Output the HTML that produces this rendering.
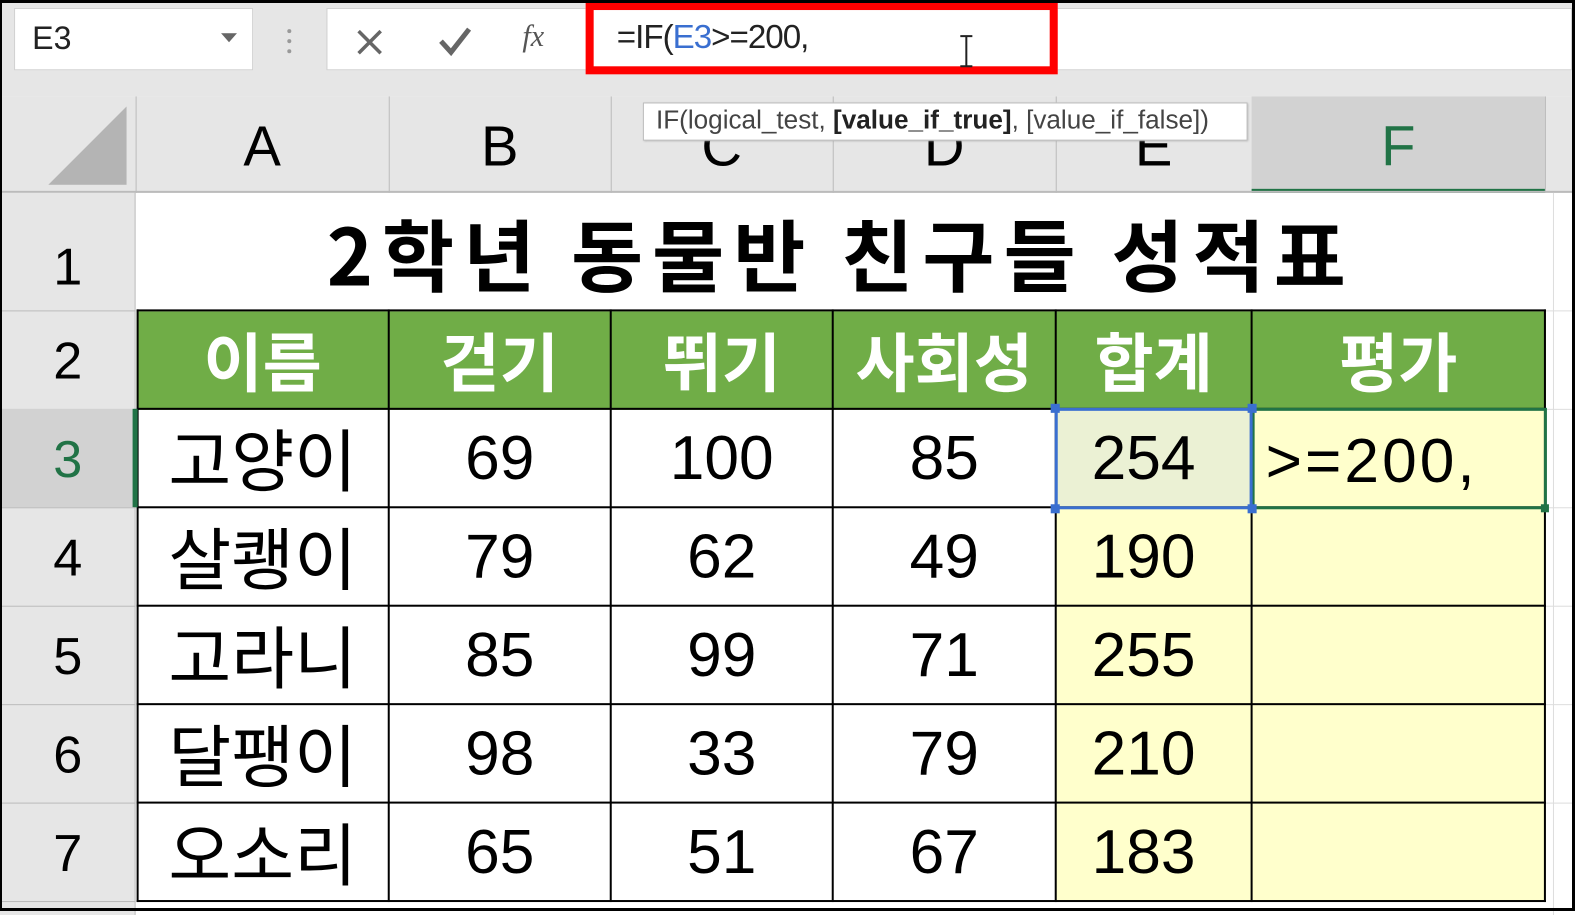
<!DOCTYPE html>
<html><head><meta charset="utf-8"><style>
*{margin:0;padding:0;box-sizing:border-box}
body{width:1575px;height:911px;overflow:hidden;background:#fff;position:relative;font-family:"Liberation Sans","Noto Sans CJK KR",sans-serif}
#w{position:absolute;left:0;top:0;width:1575px;height:911px;transform:scale(1.0045);transform-origin:0 0}
.a{position:absolute}
.frame{left:0;top:0;width:1575px;height:911px;border:3px solid #000;border-left:2px solid #000;z-index:50;pointer-events:none}
.c{position:absolute;display:flex;align-items:center;justify-content:center;color:#000}
.hl{position:absolute;background:#000}
.k{font-family:"Noto Sans CJK KR",sans-serif;font-size:68px;font-weight:400}
</style></head><body><div id="w">
<div class="a" style="left:0;top:0;width:1575px;height:96px;background:#e6e6e6"></div>
<div class="a" style="left:14px;top:8px;width:238px;height:62px;background:#fff;border:1px solid #d0d0d0"></div>
<div class="a" style="left:32px;top:20px;font-size:32px;color:#222;font-family:'Liberation Sans Narrow','Liberation Sans',sans-serif">E3</div>
<svg class="a" style="left:220px;top:33px" width="16" height="10"><path d="M0 0H16L8 9Z" fill="#666"/></svg>
<svg class="a" style="left:284px;top:28px" width="8" height="26"><circle cx="4" cy="3" r="2" fill="#999"/><circle cx="4" cy="13" r="2" fill="#999"/><circle cx="4" cy="23" r="2" fill="#999"/></svg>
<div class="a" style="left:325px;top:8px;width:1240px;height:62px;background:#fff;border:1px solid #d0d0d0"></div>
<svg class="a" style="left:354px;top:28px" width="28" height="28"><path d="M3 3L25 25M25 3L3 25" stroke="#666" stroke-width="3.5"/></svg>
<svg class="a" style="left:436px;top:26px" width="34" height="30"><path d="M3 15L13 26L31 3" stroke="#666" stroke-width="5" fill="none"/></svg>
<div class="a" style="left:520px;top:20px;font-size:30px;font-style:italic;font-family:'Liberation Serif',serif;color:#555">fx</div>
<div class="a" style="left:583px;top:2px;width:470px;height:72px;border:8px solid #f00;background:#fff"></div>
<div class="a" style="left:614px;top:18px;font-size:33px;color:#222;letter-spacing:-1px;font-family:'Liberation Sans Narrow','Liberation Sans',sans-serif">=IF(<span style="color:#3a6fd0">E3</span>&gt;=200,</div>
<svg class="a" style="left:954px;top:34px" width="16" height="34"><path d="M2 2H14M8 2V32M2 32H14" stroke="#222" stroke-width="2"/></svg>
<div class="a" style="left:0;top:96px;width:1575px;height:96px;background:#e6e6e6"></div>
<svg class="a" style="left:48px;top:106px" width="80" height="78"><path d="M78 0V78H0Z" fill="#b4b4b4"/></svg>
<div class="a" style="left:135px;top:96px;width:1px;height:96px;background:#bbb"></div>
<div class="a" style="left:387px;top:96px;width:1px;height:96px;background:#bbb"></div>
<div class="a" style="left:608px;top:96px;width:1px;height:96px;background:#bbb"></div>
<div class="a" style="left:829px;top:96px;width:1px;height:96px;background:#bbb"></div>
<div class="a" style="left:1051px;top:96px;width:1px;height:96px;background:#bbb"></div>
<div class="a" style="left:1246px;top:96px;width:292px;height:96px;background:#d2d2d2;border-bottom:4px solid #217346"></div>
<div class="a" style="left:1538px;top:96px;width:1px;height:96px;background:#bbb"></div>
<div class="a" style="left:0;top:190px;width:1575px;height:2px;background:#bbb"></div>
<div class="c" style="left:135px;top:100px;width:252px;height:90px;font-size:56px">A</div>
<div class="c" style="left:387px;top:100px;width:221px;height:90px;font-size:56px">B</div>
<div class="c" style="left:608px;top:100px;width:221px;height:90px;font-size:56px">C</div>
<div class="c" style="left:829px;top:100px;width:222px;height:90px;font-size:56px">D</div>
<div class="c" style="left:1051px;top:100px;width:195px;height:90px;font-size:56px">E</div>
<div class="c" style="left:1246px;top:100px;width:292px;height:90px;font-size:56px;color:#217346">F</div>
<div class="a" style="left:640px;top:102px;width:602px;height:38px;background:#fff;border:1px solid #bbb;box-shadow:1px 1px 2px #aaa;font-size:26px;color:#444;padding:1px 0 0 12px;white-space:nowrap;font-family:'Liberation Sans Narrow','Liberation Sans',sans-serif">IF(logical_test, <b style="color:#222">[value_if_true]</b>, [value_if_false])</div>
<div class="a" style="left:0;top:192px;width:135px;height:719px;background:#e6e6e6;border-right:1px solid #bbb"></div>
<div class="a" style="left:0;top:407px;width:135px;height:98px;background:#d2d2d2;border-right:3px solid #217346"></div>
<div class="c" style="left:0;top:222px;width:135px;height:88px;font-size:52px">1</div>
<div class="c" style="left:0;top:312px;width:135px;height:95px;font-size:52px">2</div>
<div class="c" style="left:0;top:410px;width:135px;height:95px;font-size:52px;color:#217346">3</div>
<div class="c" style="left:0;top:508px;width:135px;height:95px;font-size:52px">4</div>
<div class="c" style="left:0;top:606px;width:135px;height:95px;font-size:52px">5</div>
<div class="c" style="left:0;top:704px;width:135px;height:95px;font-size:52px">6</div>
<div class="c" style="left:0;top:802px;width:135px;height:95px;font-size:52px">7</div>
<div class="a" style="left:0;top:309px;width:135px;height:1px;background:#bbb"></div>
<div class="a" style="left:0;top:505px;width:135px;height:1px;background:#bbb"></div>
<div class="a" style="left:0;top:603px;width:135px;height:1px;background:#bbb"></div>
<div class="a" style="left:0;top:701px;width:135px;height:1px;background:#bbb"></div>
<div class="a" style="left:0;top:799px;width:135px;height:1px;background:#bbb"></div>
<div class="a" style="left:0;top:897px;width:135px;height:1px;background:#bbb"></div>
<div class="a" style="left:1546px;top:192px;width:1px;height:719px;background:#ddd"></div>
<div class="a" style="left:1538px;top:309px;width:37px;height:1px;background:#ddd"></div>
<div class="a" style="left:1538px;top:407px;width:37px;height:1px;background:#ddd"></div>
<div class="a" style="left:1538px;top:505px;width:37px;height:1px;background:#ddd"></div>
<div class="a" style="left:1538px;top:603px;width:37px;height:1px;background:#ddd"></div>
<div class="a" style="left:1538px;top:701px;width:37px;height:1px;background:#ddd"></div>
<div class="a" style="left:1538px;top:799px;width:37px;height:1px;background:#ddd"></div>
<div class="c" style="left:136px;top:195px;width:1402px;height:112px;font-size:78px;font-weight:bold;letter-spacing:9px;font-family:'Noto Sans CJK KR',sans-serif">2학년 동물반 친구들 성적표</div>
<div class="a" style="left:136px;top:310px;width:1403px;height:98px;background:#70ad47"></div>
<div style="position:absolute;left:0;top:0;font-family:'Noto Sans CJK KR',sans-serif;font-size:64px;font-weight:bold;color:#fff">
<div class="c" style="left:136px;top:310px;width:251px;height:96px;color:#fff">이름</div>
<div class="c" style="left:387px;top:310px;width:221px;height:96px;color:#fff">걷기</div>
<div class="c" style="left:608px;top:310px;width:221px;height:96px;color:#fff">뛰기</div>
<div class="c" style="left:829px;top:310px;width:222px;height:96px;color:#fff">사회성</div>
<div class="c" style="left:1051px;top:310px;width:195px;height:96px;color:#fff">합계</div>
<div class="c" style="left:1246px;top:310px;width:292px;height:96px;color:#fff">평가</div>
</div>
<div class="a" style="left:1051px;top:407px;width:487px;height:490px;background:#ffffcc"></div>
<div class="a" style="left:1051px;top:407px;width:195px;height:98px;background:#ebf1d4"></div>
<div class="hl" style="left:136px;top:308px;width:1403px;height:2px"></div>
<div class="hl" style="left:136px;top:406px;width:1403px;height:2px"></div>
<div class="hl" style="left:136px;top:504px;width:1403px;height:2px"></div>
<div class="hl" style="left:136px;top:602px;width:1403px;height:2px"></div>
<div class="hl" style="left:136px;top:700px;width:1403px;height:2px"></div>
<div class="hl" style="left:136px;top:798px;width:1403px;height:2px"></div>
<div class="hl" style="left:136px;top:896px;width:1403px;height:2px"></div>
<div class="hl" style="left:136px;top:308px;width:2px;height:590px"></div>
<div class="hl" style="left:386px;top:308px;width:2px;height:590px"></div>
<div class="hl" style="left:607px;top:308px;width:2px;height:590px"></div>
<div class="hl" style="left:828px;top:308px;width:2px;height:590px"></div>
<div class="hl" style="left:1050px;top:308px;width:2px;height:590px"></div>
<div class="hl" style="left:1245px;top:308px;width:2px;height:590px"></div>
<div class="hl" style="left:1537px;top:308px;width:2px;height:590px"></div>
<div class="a" style="left:134px;top:407px;width:3px;height:98px;background:#217346"></div>
<div class="a" style="left:1246px;top:406px;width:294px;height:101px;border:3px solid #217346"></div>
<div class="a" style="left:1534px;top:502px;width:8px;height:8px;background:#217346"></div>
<div class="a" style="left:1050px;top:406px;width:197px;height:101px;border:3px solid #3a6fd0"></div>
<div class="a" style="left:1046px;top:402px;width:9px;height:9px;background:#3a6fd0"></div>
<div class="a" style="left:1242px;top:402px;width:9px;height:9px;background:#3a6fd0"></div>
<div class="a" style="left:1046px;top:502px;width:9px;height:9px;background:#3a6fd0"></div>
<div class="a" style="left:1242px;top:502px;width:9px;height:9px;background:#3a6fd0"></div>
<div style="position:absolute;left:0;top:0;font-size:62px">
<div class="c k" style="left:136px;top:406px;width:251px;height:96px">고양이</div>
<div class="c" style="left:387px;top:408px;width:221px;height:96px">69</div>
<div class="c" style="left:608px;top:408px;width:221px;height:96px">100</div>
<div class="c" style="left:829px;top:408px;width:222px;height:96px">85</div>
<div class="c" style="left:1051px;top:408px;width:175px;height:96px">254</div>
<div class="a" style="left:1260px;top:420px;height:80px;line-height:80px;font-size:62px;letter-spacing:3px">&gt;=200,</div>
<div class="c k" style="left:136px;top:504px;width:251px;height:96px">살쾡이</div>
<div class="c" style="left:387px;top:506px;width:221px;height:96px">79</div>
<div class="c" style="left:608px;top:506px;width:221px;height:96px">62</div>
<div class="c" style="left:829px;top:506px;width:222px;height:96px">49</div>
<div class="c" style="left:1051px;top:506px;width:175px;height:96px">190</div>
<div class="c k" style="left:136px;top:602px;width:251px;height:96px">고라니</div>
<div class="c" style="left:387px;top:604px;width:221px;height:96px">85</div>
<div class="c" style="left:608px;top:604px;width:221px;height:96px">99</div>
<div class="c" style="left:829px;top:604px;width:222px;height:96px">71</div>
<div class="c" style="left:1051px;top:604px;width:175px;height:96px">255</div>
<div class="c k" style="left:136px;top:700px;width:251px;height:96px">달팽이</div>
<div class="c" style="left:387px;top:702px;width:221px;height:96px">98</div>
<div class="c" style="left:608px;top:702px;width:221px;height:96px">33</div>
<div class="c" style="left:829px;top:702px;width:222px;height:96px">79</div>
<div class="c" style="left:1051px;top:702px;width:175px;height:96px">210</div>
<div class="c k" style="left:136px;top:798px;width:251px;height:96px">오소리</div>
<div class="c" style="left:387px;top:800px;width:221px;height:96px">65</div>
<div class="c" style="left:608px;top:800px;width:221px;height:96px">51</div>
<div class="c" style="left:829px;top:800px;width:222px;height:96px">67</div>
<div class="c" style="left:1051px;top:800px;width:175px;height:96px">183</div>
</div>
</div>
<div class="a frame"></div>
</body></html>
